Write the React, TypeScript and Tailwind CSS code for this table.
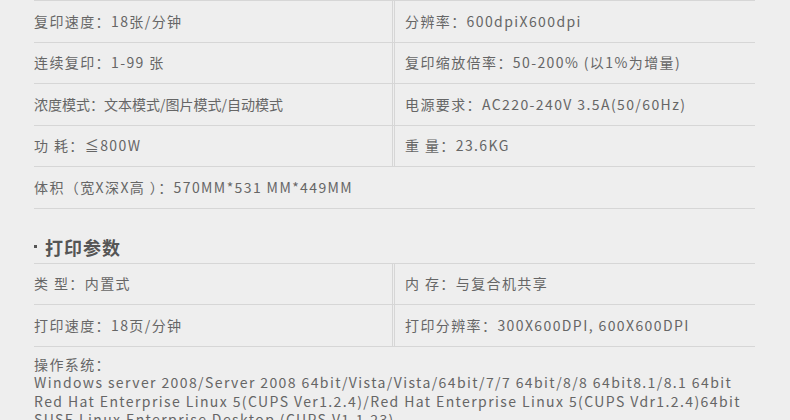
// Spec sheet
const font = '"Noto Sans CJK SC", "Noto Sans", sans-serif'

type Cell = { text: string; cls?: string }

function Row({ left, right }: { left: Cell; right: Cell }) {
  return (
    <div className="flex h-[41.5px] border-b border-[#d6d6d6]">
      <div className={`flex w-[359px] items-center border-r border-[#d6d6d6] ${left.cls ?? 'tracking-[1.4px]'}`}>
        {left.text}
      </div>
      <div className={`ml-[1px] flex flex-1 items-center border-l border-[#d6d6d6] pl-[10px] ${right.cls ?? 'tracking-[1.4px]'}`}>
        {right.text}
      </div>
    </div>
  )
}

export default function App() {
  return (
    <div className="h-[420px] w-[790px] overflow-hidden bg-[#eeeeee] text-[14px] text-[#666666]" style={{ fontFamily: font }}>
      <div className="ml-[34px] w-[721px]">
        {/* Copy params */}
        <div className="border-t border-[#d6d6d6]">
          <Row left={{ text: '复印速度：18张/分钟' }} right={{ text: '分辨率：600dpiX600dpi' }} />
          <Row left={{ text: '连续复印：1-99 张' }} right={{ text: '复印缩放倍率：50-200% (以1%为增量)' }} />
          <Row left={{ text: '浓度模式：文本模式/图片模式/自动模式', cls: 'tracking-normal' }} right={{ text: '电源要求：AC220-240V 3.5A(50/60Hz)' }} />
          <Row left={{ text: '功 耗：≦800W' }} right={{ text: '重 量：23.6KG' }} />
          <div className="flex h-[41.5px] items-center border-b border-[#d6d6d6] tracking-[1.4px]">
            体积（宽X深X高 ）：570MM*531 MM*449MM
          </div>
        </div>

        {/* Print params */}
        <div className="flex h-[54px] items-end pb-[4px]">
          <h2 className="flex items-center text-[18px] font-bold leading-6 tracking-[1px] text-[#555555]">
            <span className="mr-[8px] h-[3px] w-[3px] bg-[#555555]" />
            打印参数
          </h2>
        </div>
        <div className="border-t border-[#d6d6d6]">
          <Row left={{ text: '类 型：内置式' }} right={{ text: '内 存：与复合机共享' }} />
          <Row left={{ text: '打印速度：18页/分钟' }} right={{ text: '打印分辨率：300X600DPI, 600X600DPI' }} />
        </div>

        <div className="pt-[8px] leading-[18.5px] tracking-[1.4px]">
          <p>操作系统：</p>
          <p>Windows server 2008/Server 2008 64bit/Vista/Vista/64bit/7/7 64bit/8/8 64bit8.1/8.1 64bit</p>
          <p>Red Hat Enterprise Linux 5(CUPS Ver1.2.4)/Red Hat Enterprise Linux 5(CUPS Vdr1.2.4)64bit</p>
          <p>SUSE Linux Enterprise Desktop (CUPS V1.1.23)</p>
        </div>
      </div>
    </div>
  )
}
